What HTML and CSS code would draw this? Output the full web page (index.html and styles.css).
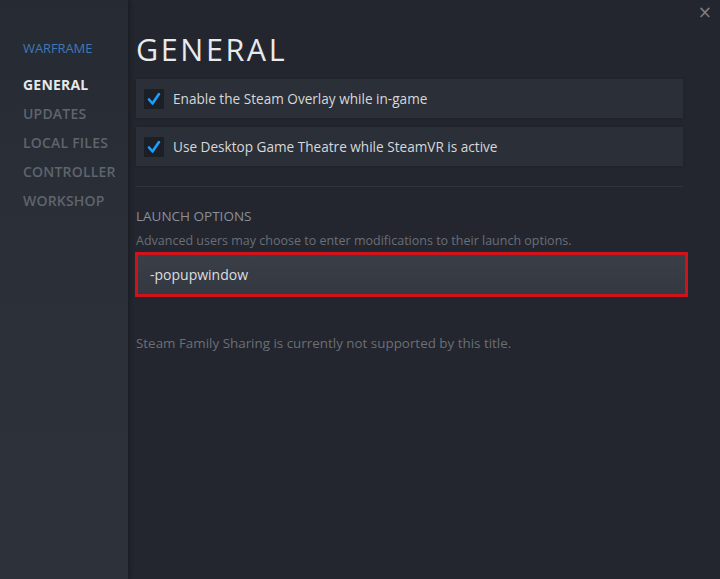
FILE: index.html
```html
<!DOCTYPE html>
<html>
<head>
<meta charset="utf-8">
<link rel="stylesheet" href="styles.css">
</head>
<body>
<div class="window">
  <nav class="sidebar">
    <div class="game">WARFRAME</div>
    <ul class="menu">
      <li class="active">GENERAL</li>
      <li>UPDATES</li>
      <li>LOCAL FILES</li>
      <li>CONTROLLER</li>
      <li>WORKSHOP</li>
    </ul>
  </nav>
  <main class="content">
    <h1 class="title">GENERAL</h1>
    <div class="option">
      <span class="check"><svg viewBox="0 0 20 20" width="20" height="20"><path d="M5 10.5 L8.5 14.5 L15 5" fill="none" stroke="#1a9fff" stroke-width="2.6" stroke-linecap="round" stroke-linejoin="round"/></svg></span>
      <span class="label">Enable the Steam Overlay while in-game</span>
    </div>
    <div class="option">
      <span class="check"><svg viewBox="0 0 20 20" width="20" height="20"><path d="M5 10.5 L8.5 14.5 L15 5" fill="none" stroke="#1a9fff" stroke-width="2.6" stroke-linecap="round" stroke-linejoin="round"/></svg></span>
      <span class="label">Use Desktop Game Theatre while SteamVR is active</span>
    </div>
    <div class="sep"></div>
    <div class="section-title">LAUNCH OPTIONS</div>
    <div class="desc">Advanced users may choose to enter modifications to their launch options.</div>
    <div class="input">-popupwindow</div>
    <div class="note">Steam Family Sharing is currently not supported by this title.</div>
  </main>
  <div class="close">×</div>
</div>
</body>
</html>
```
FILE: styles.css
```css
html, body {
  margin: 0;
  padding: 0;
  width: 720px;
  height: 579px;
  overflow: hidden;
  background: #23262e;
  font-family: "Open Sans", "DejaVu Sans", sans-serif;
}
.window {
  position: relative;
  display: flex;
  width: 720px;
  height: 579px;
}
.sidebar {
  width: 128px;
  flex: none;
  background: linear-gradient(180deg, #262a32 0%, #2b2f38 40%, #2d3139 100%);
  box-shadow: 2px 0 4px rgba(0,0,0,0.25);
  padding: 40px 0 0 23px;
  box-sizing: border-box;
}
.game {
  color: #3d7ab5;
  font-size: 13px;
  letter-spacing: -0.1px;
  height: 16px;
  line-height: 16px;
}
.menu {
  list-style: none;
  margin: 14px 0 0 0;
  padding: 0;
}
.menu li {
  color: #5f646d;
  font-size: 14px;
  font-weight: 600;
  line-height: 29px;
  height: 29px;
  letter-spacing: 0.2px;
}
.menu li.active {
  color: #e6e8ea;
  font-weight: 700;
}
.content {
  flex: 1;
  padding: 29px 37px 0 8px;
  box-sizing: border-box;
}
.title {
  margin: 0 0 10px 0;
  font-weight: 400;
  font-size: 30.5px;
  letter-spacing: 2.6px;
  color: #e8eaec;
  line-height: 40px;
  height: 40px;
}
.option {
  display: flex;
  align-items: center;
  height: 39px;
  background: #2b2f37;
  margin-bottom: 9px;
  padding-left: 8px;
  box-shadow: 0 0 3px rgba(0,0,0,0.15);
}
.check {
  width: 20px;
  height: 20px;
  background: #1c1f26;
  display: flex;
  border-radius: 1px;
}
.label {
  margin-left: 9px;
  color: #d6d8db;
  font-size: 13.6px;
}
.sep {
  height: 1px;
  background: #2f333b;
  margin-top: 20px;
  margin-bottom: 20px;
}
.section-title {
  color: #8a9098;
  font-size: 13.5px;
  height: 18px;
  line-height: 18px;
}
.desc {
  color: #6a6f78;
  font-size: 12.5px;
  margin-top: 8px;
  line-height: 16px;
}
.input {
  margin-top: 3px;
  margin-left: -1px;
  margin-right: -5px;
  height: 45px;
  box-sizing: border-box;
  border: 3px solid #d0121b;
  background: linear-gradient(180deg, #3a3e46, #343840);
  color: #dcdee0;
  font-size: 14px;
  padding-left: 12px;
  display: flex;
  align-items: center;
}
.note {
  margin-top: 37px;
  color: #6a6f78;
  font-size: 13.4px;
}
.close {
  position: absolute;
  right: 8px;
  top: 2px;
  color: #7a7f88;
  font-size: 17px;
  font-family: "DejaVu Sans", sans-serif;
}
```
